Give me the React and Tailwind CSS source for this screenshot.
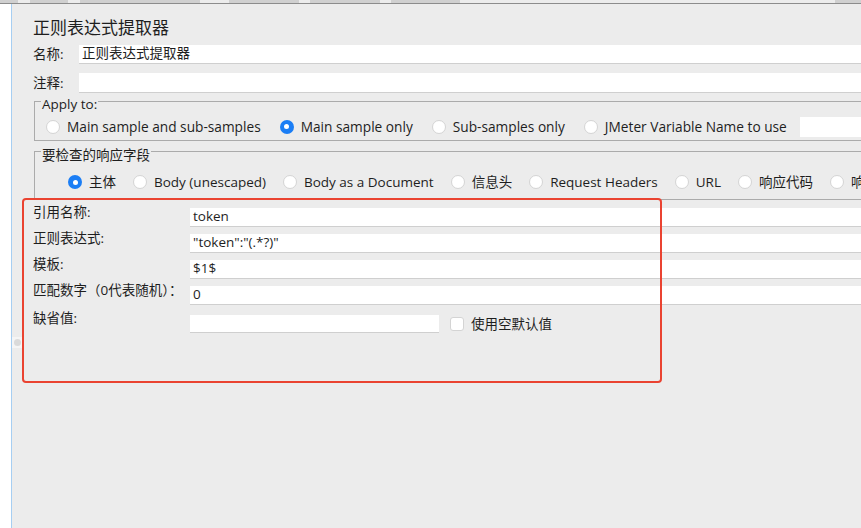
import React from 'react';

const font = { fontFamily: '"Open Sans", "Noto Sans CJK SC", sans-serif' };

const Radio = ({ checked }) =>
    checked ? (
        <span className="w-[14px] h-[14px] rounded-full bg-[#1b7ef5] flex items-center justify-center shrink-0">
            <span className="w-[5px] h-[5px] rounded-full bg-white"></span>
        </span>
    ) : (
        <span className="w-[14px] h-[14px] rounded-full bg-white border border-[#d4d4d4] shrink-0"></span>
    );

const Option = ({ label, checked }) => (
    <div className="flex items-center gap-[7px] shrink-0 whitespace-nowrap">
        <Radio checked={checked} />
        <span>{label}</span>
    </div>
);

const Field = ({ value = '' }) => (
    <div className="flex-1 h-full bg-white border-b border-[#cfcfcf] flex items-center pl-[3px] leading-none">
        {value}
    </div>
);

const FormRow = ({ label, value, children }) => (
    <div className="flex items-center h-[19px]">
        <div className="w-[157px] shrink-0 pb-[12px] leading-[12px]">{label}</div>
        {children || <Field value={value} />}
    </div>
);

const tabs = [
    [0, 18], [30, 68], [80, 200], [229, 299], [310, 380], [391, 460], [835, 861],
];

export default function App() {
    return (
        <div className="relative w-[861px] h-[528px] overflow-hidden bg-[#ececec] text-[#1e1e1e] text-[13.5px] flex flex-col" style={font}>
            {/* top tab strip */}
            <div className="h-[4px] flex border-b border-[#8c8c8c] bg-[#ececec] shrink-0">
                {tabs.map(([a, b], i) => (
                    <div
                        key={i}
                        className="h-[3px] bg-[#d0d0d0]"
                        style={{ marginLeft: i === 0 ? a : a - tabs[i - 1][1], width: b - a }}
                    ></div>
                ))}
            </div>

            <div className="flex flex-1 min-h-0">
                <div className="w-[12px] shrink-0 bg-white border-r border-[#a6cef2]"></div>

                <div className="flex-1 flex flex-col pl-[21px] min-w-0">
                    <div className="h-[41px] pt-[6px] flex items-center text-[17px] shrink-0">正则表达式提取器</div>

                    <div className="flex items-center h-[19px]">
                        <div className="w-[46px] shrink-0">名称:</div>
                        <Field value="正则表达式提取器" />
                    </div>
                    <div className="flex items-center h-[20px] mt-[9px]">
                        <div className="w-[46px] shrink-0">注释:</div>
                        <Field />
                    </div>

                    {/* Apply to */}
                    <div className="mt-[8px] ml-[1px] -mr-[40px] border border-[#ababab] pb-[2px]">
                        <div className="-mt-[6px] ml-[6px] w-fit px-[1px] bg-[#ececec] leading-[16px]">Apply to:</div>
                        <div className="mt-[4px] h-[22px] flex items-center pl-[11px] gap-[19px] text-[13.7px]">
                            <Option label="Main sample and sub-samples" />
                            <Option label="Main sample only" checked />
                            <Option label="Sub-samples only" />
                            <Option label="JMeter Variable Name to use" />
                            <div className="w-[200px] h-[20px] bg-white shrink-0 -ml-[6px]"></div>
                        </div>
                    </div>

                    {/* fields to check */}
                    <div className="mt-[10px] ml-[1px] -mr-[40px] border border-[#ababab] pb-[6px]">
                        <div className="-mt-[5px] ml-[6px] w-fit px-[1px] bg-[#ececec] leading-[16px]">要检查的响应字段</div>
                        <div className="mt-[8px] h-[22px] flex items-center pl-[33px] gap-[17px]">
                            <Option label="主体" checked />
                            <Option label="Body (unescaped)" />
                            <Option label="Body as a Document" />
                            <Option label="信息头" />
                            <Option label="Request Headers" />
                            <Option label="URL" />
                            <Option label="响应代码" />
                            <Option label="响应信息" />
                        </div>
                    </div>

                    {/* extractor fields */}
                    <div className="mt-[8px] flex flex-col gap-[7px]">
                        <FormRow label="引用名称:" value="token" />
                        <FormRow label="正则表达式:" value={'"token":"(.*?)"'} />
                        <FormRow label="模板:" value="$1$" />
                        <FormRow label="匹配数字（0代表随机）：" value="0" />
                        <div className="mt-[2px]">
                            <FormRow label="缺省值:">
                                <div className="w-[249px] h-[18px] bg-white border-b border-[#cfcfcf] shrink-0"></div>
                                <span className="ml-[11px] w-[14px] h-[14px] rounded-[3px] bg-white border border-[#d4d4d4] shrink-0"></span>
                                <span className="ml-[7px] pt-[1px]">使用空默认值</span>
                            </FormRow>
                        </div>
                    </div>
                </div>
            </div>

            {/* splitter knob */}
            <div className="absolute left-[12px] top-[337px] w-[10px] h-[11px] bg-[#f5f5f5] flex items-center justify-center">
                <span className="w-[7px] h-[7px] rounded-full bg-[#dadada]"></span>
            </div>

            {/* red annotation box */}
            <div className="absolute left-[22px] top-[198px] w-[640px] h-[185px] border-[2.5px] border-[#ea4331] rounded-[4px]"></div>
        </div>
    );
}
